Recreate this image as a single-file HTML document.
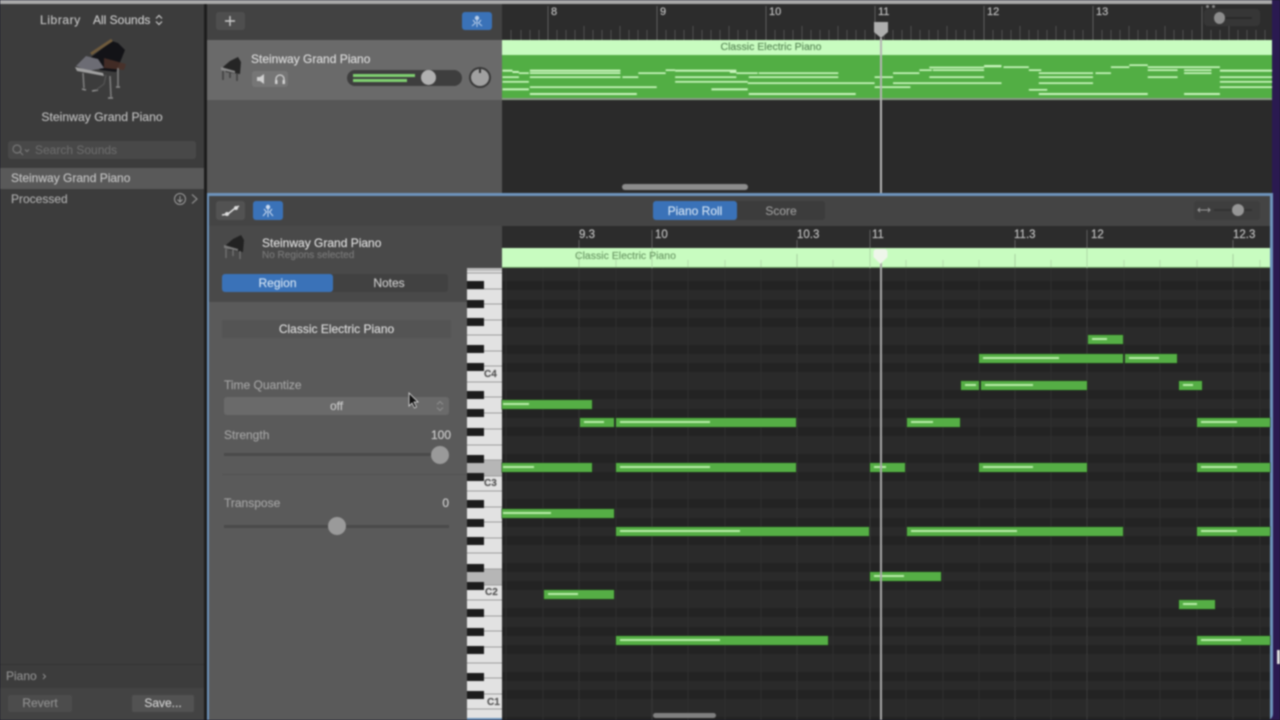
<!DOCTYPE html>
<html><head><meta charset="utf-8"><title>Piano Roll</title>
<style>
*{box-sizing:border-box;margin:0;padding:0}
html,body{width:1280px;height:720px;overflow:hidden;background:#1a1a2a}
body{font-family:"Liberation Sans",sans-serif;position:relative}
#w{position:absolute;left:0;top:0;width:1280px;height:720px;overflow:hidden;filter:blur(.7px);background:#2a1a50}
#w div,#w span,#w svg{position:absolute}
.t{white-space:nowrap;font-size:12px;line-height:14px;color:#c8c8c8;-webkit-text-stroke:.15px currentColor}
.n{background:#55ae45;height:9px;box-shadow:0 0 0 .5px #1c3a18}
.n i{position:absolute;left:4px;top:3px;height:2px;background:#b8eca8;display:block}
.knob{border-radius:50%;background:#9a9a9a}
</style></head><body>
<div id="w">
<!-- top bar -->
<div style="left:0;top:0;width:1272px;height:4px;background:#a9a9a9"></div>
<!-- library -->
<div style="left:0;top:4px;width:204px;height:716px;background:#3c3c3c"></div>
<div style="left:204px;top:4px;width:3px;height:716px;background:#1d1d1d"></div>
<div class="t" style="left:40px;top:13px;color:#c0c0c0;letter-spacing:.6px">Library</div>
<div class="t" style="left:93px;top:13px;color:#c8c8c8">All Sounds</div>
<svg style="left:155px;top:14px" width="8" height="12" viewBox="0 0 8 12"><path d="M1 4.5L4 1.5L7 4.5M1 7.5L4 10.5L7 7.5" fill="none" stroke="#c8c8c8" stroke-width="1.2"/></svg>
<svg style="left:60px;top:30px" width="80" height="75" viewBox="60 30 80 75">
<path d="M112 41L118 43L125 50L121 60L116 72L100 70L90 58Z" fill="#131317"/>
<path d="M91 54L112 40" stroke="#6e5a3c" stroke-width="3"/>
<path d="M76 66L86 56L98 59L104 68L88 71Z" fill="#6c6c74"/>
<path d="M75 67L103 73L104 76L77 71Z" fill="#a0a0a0"/>
<path d="M104 58L126 64L124 70L104 68Z" fill="#4a3028" opacity=".85"/>
<path d="M83 73L84 88M110 76L111 97M118 68L118 86" stroke="#7c7c7c" stroke-width="1.6"/>
<path d="M82 89L86 90M92 91L98 90M108 98L113 98M116 87L120 87" stroke="#909090" stroke-width="1.6"/>
<path d="M106 75L104 84L96 90" stroke="#555" stroke-width="1.2" fill="none"/>
</svg>
<div class="t" style="left:0;top:110px;width:204px;text-align:center;color:#bcbcbc;font-size:12.2px">Steinway Grand Piano</div>
<div style="left:8px;top:141px;width:188px;height:18px;background:#484848;border-radius:3px"></div>
<svg style="left:11px;top:143px" width="20" height="14" viewBox="0 0 20 14"><circle cx="6" cy="6" r="4" fill="none" stroke="#777" stroke-width="1.2"/><path d="M9 9L12 12M14 6.5L16 8.5L18 6.5" stroke="#777" stroke-width="1.2" fill="none"/></svg>
<div class="t" style="left:35px;top:143px;color:#6a6a6a">Search Sounds</div>
<div style="left:0;top:168px;width:204px;height:21px;background:#595959"></div>
<div class="t" style="left:11px;top:171px;color:#c2c2c2">Steinway Grand Piano</div>
<div class="t" style="left:11px;top:192px;color:#aaa">Processed</div>
<svg style="left:173px;top:192px" width="28" height="14" viewBox="0 0 28 14"><circle cx="7" cy="7" r="5.5" fill="none" stroke="#9a9a9a"/><path d="M7 4V10M4.5 7.5L7 10L9.5 7.5" stroke="#9a9a9a" fill="none"/><path d="M19 2.5L24 7L19 11.5" stroke="#8c8c8c" fill="none" stroke-width="1.2"/></svg>
<div style="left:0;top:664px;width:204px;height:1px;background:#333"></div>
<div style="left:0;top:688px;width:204px;height:32px;background:#434343"></div>
<div class="t" style="left:6px;top:669px;color:#8e8e8e">Piano</div>
<svg style="left:42px;top:673px" width="5" height="7" viewBox="0 0 5 7"><path d="M1 1L3.5 3.5L1 6" stroke="#8e8e8e" fill="none"/></svg>
<div style="left:8px;top:695px;width:64px;height:17px;background:#4c4c4c;border-radius:2px"></div>
<div class="t" style="left:8px;top:696px;width:64px;text-align:center;color:#8f8f8f">Revert</div>
<div style="left:132px;top:695px;width:62px;height:17px;background:#525252;border-radius:2px"></div>
<div class="t" style="left:132px;top:696px;width:62px;text-align:center;color:#d0d0d0">Save...</div>

<!-- tracks header -->
<div style="left:207px;top:4px;width:295px;height:36px;background:#424242"></div>
<div style="left:216px;top:12px;width:29px;height:18px;background:#4e4e4e;border-radius:3px"></div>
<svg style="left:224px;top:15px" width="12" height="12" viewBox="0 0 12 12"><path d="M6 1V11M1 6H11" stroke="#c8c8c8" stroke-width="1.4"/></svg>
<div style="left:462px;top:12px;width:30px;height:18px;background:#3a72b8;border-radius:3px"></div>
<svg style="left:470px;top:14px" width="14" height="14" viewBox="0 0 14 14"><circle cx="7" cy="4" r="2.2" fill="#b8cde8"/><path d="M7 6V13M3 6L5.5 9L2 12M11 6L8.5 9L12 12" stroke="#b8cde8" fill="none"/></svg>
<div style="left:207px;top:40px;width:295px;height:60px;background:#6a6a6a"></div>
<div style="left:207px;top:100px;width:295px;height:93px;background:#565656"></div>
<svg style="left:218px;top:54px" width="26" height="30" viewBox="0 0 26 30"><path d="M5 13L12 7L20 3L23 8L22 20L8 18Z" fill="#252525"/><path d="M3 13L17 17V19L3 16Z" fill="#8a8a8a"/><path d="M5 17V26M19 19V27M12 18V24" stroke="#3c3c3c" stroke-width="1.4"/></svg>
<div class="t" style="left:251px;top:52px;color:#dcdcdc">Steinway Grand Piano</div>
<div style="left:252px;top:71px;width:36px;height:16px;background:#767676;border-radius:3px"></div>
<svg style="left:254px;top:72px" width="32" height="14" viewBox="0 0 32 14"><path d="M3 5H6L10 2V12L6 9H3Z" fill="#d0d0d0"/><path d="M22 10V7A4 4 0 0 1 30 7V10" fill="none" stroke="#d0d0d0" stroke-width="1.3"/><rect x="21" y="8" width="2.5" height="4" fill="#d0d0d0"/><rect x="28.5" y="8" width="2.5" height="4" fill="#d0d0d0"/></svg>
<div style="left:347px;top:70px;width:115px;height:16px;background:#3e3e3e;border-radius:8px"></div>
<div style="left:353px;top:74px;width:62px;height:2.5px;background:#7fcf70"></div>
<div style="left:353px;top:79px;width:54px;height:2.5px;background:#7fcf70"></div>
<div class="knob" style="left:421px;top:70px;width:15px;height:15px;background:#b0b0b0"></div>
<div style="left:469px;top:67px;width:22px;height:21px;border-radius:50%;background:#a0a0a0;border:2.5px solid #383838"></div>
<div style="left:479px;top:69px;width:2px;height:4px;background:#333"></div>

<!-- top timeline -->
<div style="left:502px;top:4px;width:770px;height:36px;background:#2c2c2c"></div>
<svg style="left:502px;top:4px" width="770" height="36" viewBox="0 0 770 36">
<g stroke-width="1">
<path d="M46 2V36M155 2V36M264 2V36M373 2V36M482 2V36M591 2V36M700 2V36" stroke="#5e5e5e"/>
<path d="M9 26V36M19 26V36M28 26V36M37 26V36M55 26V36M64 26V36M73 26V36M82 22V36M91 26V36M100 26V36M109 26V36M118 22V36M127 26V36M136 26V36M145 26V36M164 26V36M173 26V36M182 26V36M191 22V36M200 26V36M209 26V36M218 26V36M227 22V36M236 26V36M245 26V36M254 26V36M273 26V36M282 26V36M291 26V36M300 22V36M309 26V36M318 26V36M327 26V36M336 22V36M345 26V36M354 26V36M363 26V36M382 26V36M391 26V36M400 26V36M409 22V36M418 26V36M427 26V36M436 26V36M445 22V36M454 26V36M463 26V36M472 26V36M491 26V36M500 26V36M509 26V36M518 22V36M527 26V36M536 26V36M545 26V36M554 22V36M563 26V36M572 26V36M581 26V36M600 26V36M609 26V36M618 26V36M627 22V36M636 26V36M645 26V36M654 26V36M663 22V36M672 26V36M681 26V36M690 26V36M709 26V36M718 26V36M727 22V36M736 26V36M745 26V36M754 26V36M763 26V36" stroke="#505050"/>
</g></svg>
<div class="t" style="left:551px;top:5px;color:#c0c0c0;font-size:11px">8</div>
<div class="t" style="left:660px;top:5px;color:#c0c0c0;font-size:11px">9</div>
<div class="t" style="left:769px;top:5px;color:#c0c0c0;font-size:11px">10</div>
<div class="t" style="left:878px;top:5px;color:#c0c0c0;font-size:11px">11</div>
<div class="t" style="left:987px;top:5px;color:#c0c0c0;font-size:11px">12</div>
<div class="t" style="left:1096px;top:5px;color:#c0c0c0;font-size:11px">13</div>
<div style="left:1204px;top:9px;width:56px;height:17px;background:#363636;border-radius:4px"></div>
<div style="left:1206px;top:5px;width:3px;height:3px;background:#888;border-radius:50%"></div>
<div style="left:1212px;top:5px;width:3px;height:3px;background:#888;border-radius:50%"></div>
<div style="left:1216px;top:17px;width:36px;height:2px;background:#2a2a2a"></div>
<div class="knob" style="left:1214px;top:12px;width:11px;height:12px;background:#8c8c8c"></div>

<!-- region -->
<div style="left:502px;top:40px;width:770px;height:16px;background:#c8fcc0"></div>
<div style="left:502px;top:55px;width:770px;height:44px;background:#52ae44"></div>
<div style="left:502px;top:98px;width:770px;height:2px;background:#8a9a86"></div>
<div class="t" style="left:502px;top:41px;width:538px;text-align:center;font-size:10.5px;color:#5b8a58;line-height:13px">Classic Electric Piano</div>
<svg style="left:0;top:0" width="1280" height="100" viewBox="0 0 1280 100">
<g transform="translate(500,0) scale(.4975,.3333)" fill="#c8f4bc">
<rect x="5" y="209" width="20" height="6"/><rect x="25" y="213" width="13" height="6"/><rect x="60" y="209" width="182" height="6"/><rect x="38" y="217" width="20" height="5"/><rect x="60" y="217" width="182" height="5"/><rect x="278" y="217" width="55" height="5"/><rect x="333" y="208" width="19" height="5"/><rect x="352" y="209" width="123" height="6"/><rect x="462" y="213" width="13" height="6"/><rect x="475" y="217" width="43" height="5"/><rect x="520" y="217" width="160" height="5"/>
<rect x="5" y="229" width="33" height="5"/><rect x="60" y="229" width="182" height="5"/><rect x="246" y="229" width="32" height="5"/><rect x="352" y="229" width="123" height="5"/><rect x="500" y="229" width="180" height="5"/>
<rect x="5" y="243" width="53" height="5"/><rect x="352" y="243" width="146" height="5"/><rect x="498" y="247" width="255" height="5"/><rect x="5" y="265" width="53" height="6"/><rect x="60" y="259" width="255" height="5"/><rect x="425" y="265" width="73" height="6"/><rect x="60" y="279" width="215" height="6"/><rect x="500" y="279" width="215" height="6"/>
<rect x="753" y="229" width="37" height="5"/><rect x="790" y="217" width="53" height="5"/><rect x="843" y="208" width="25" height="5"/><rect x="863" y="200" width="110" height="5"/><rect x="870" y="208" width="103" height="5"/><rect x="973" y="195" width="35" height="7"/><rect x="1012" y="199" width="51" height="5"/><rect x="1063" y="208" width="25" height="5"/><rect x="1083" y="217" width="109" height="5"/><rect x="1197" y="217" width="31" height="5"/><rect x="1228" y="199" width="37" height="5"/><rect x="1265" y="193" width="37" height="5"/><rect x="1302" y="199" width="145" height="5"/><rect x="1302" y="208" width="60" height="5"/><rect x="1375" y="208" width="55" height="5"/><rect x="1375" y="217" width="55" height="5"/><rect x="1447" y="209" width="105" height="6"/><rect x="1447" y="229" width="105" height="5"/><rect x="1302" y="229" width="60" height="5"/><rect x="863" y="229" width="110" height="5"/><rect x="1083" y="229" width="109" height="5"/><rect x="790" y="247" width="218" height="5"/><rect x="1083" y="247" width="109" height="5"/><rect x="1447" y="243" width="105" height="5"/><rect x="1447" y="259" width="105" height="5"/><rect x="753" y="259" width="72" height="5"/><rect x="1063" y="267" width="37" height="5"/><rect x="1083" y="279" width="219" height="6"/><rect x="1375" y="279" width="72" height="6"/>
</g></svg>
<div style="left:502px;top:100px;width:770px;height:93px;background:#2a2a2a"></div>
<div style="left:622px;top:184px;width:126px;height:6px;background:#8c8c8c;border-radius:3px"></div>
<!-- top playhead -->
<div style="left:880px;top:38px;width:1.5px;height:155px;background:#b4b4b4"></div>
<svg style="left:873px;top:21px" width="16" height="18" viewBox="0 0 16 18"><path d="M1 1H15V11L8 17L1 11Z" fill="#aeaeae"/></svg>

<!-- lower panel -->
<div style="left:207px;top:193px;width:1066px;height:527px;background:#6d93bb;border-radius:0 0 6px 0"></div>
<div style="left:209px;top:196px;width:1061px;height:30px;background:#444"></div>
<div style="left:209px;top:226px;width:293px;height:42px;background:#494949"></div>
<div style="left:209px;top:268px;width:258px;height:34px;background:#494949"></div>
<div style="left:209px;top:302px;width:258px;height:418px;background:#5a5a5a"></div>
<div style="left:222px;top:474px;width:245px;height:1px;background:#525252"></div>
<div style="left:216px;top:201px;width:29px;height:19px;background:#525252;border-radius:3px"></div>
<svg style="left:220px;top:203px" width="22" height="15" viewBox="0 0 22 15"><path d="M2 12L8 11L14 6L19 3" stroke="#ddd" stroke-width="1.5" fill="none"/><circle cx="7" cy="11" r="2" fill="#ddd"/><circle cx="16" cy="5" r="2" fill="#ddd"/></svg>
<div style="left:253px;top:201px;width:30px;height:19px;background:#3a72b8;border-radius:3px"></div>
<svg style="left:261px;top:203px" width="14" height="15" viewBox="0 0 14 15"><circle cx="7" cy="4" r="2.2" fill="#c8d8ee"/><path d="M7 6V14M3 6L5.5 9L2 13M11 6L8.5 9L12 13" stroke="#c8d8ee" fill="none"/></svg>
<svg style="left:221px;top:232px" width="26" height="30" viewBox="0 0 26 30"><path d="M5 13L12 7L20 3L23 8L22 20L8 18Z" fill="#222"/><path d="M3 13L17 17V19L3 16Z" fill="#787878"/><path d="M5 17V26M19 19V27M12 18V24" stroke="#777" stroke-width="1.2"/></svg>
<div class="t" style="left:262px;top:236px;color:#dedede">Steinway Grand Piano</div>
<div class="t" style="left:262px;top:250px;font-size:10px;line-height:12px;color:#787878">No Regions selected</div>
<div style="left:222px;top:274px;width:226px;height:18px;background:#414141;border-radius:3px"></div>
<div style="left:222px;top:274px;width:111px;height:18px;background:#3a72b8;border-radius:3px"></div>
<div class="t" style="left:222px;top:276px;width:111px;text-align:center;color:#cfe0f2">Region</div>
<div class="t" style="left:333px;top:276px;width:112px;text-align:center;color:#c8c8c8">Notes</div>
<div style="left:222px;top:320px;width:229px;height:18px;background:#545454"></div>
<div class="t" style="left:222px;top:322px;width:229px;text-align:center;color:#dcdcdc">Classic Electric Piano</div>
<div class="t" style="left:224px;top:378px;color:#a2a2a2">Time Quantize</div>
<div style="left:224px;top:397px;width:225px;height:18px;background:#6a6a6a;border-radius:3px"></div>
<div class="t" style="left:224px;top:399px;width:225px;text-align:center;color:#c8c8c8">off</div>
<svg style="left:436px;top:400px" width="8" height="12" viewBox="0 0 8 12"><path d="M1 4.5L4 1.5L7 4.5M1 7.5L4 10.5L7 7.5" fill="none" stroke="#8c8c8c" stroke-width="1.1"/></svg>
<svg style="left:407px;top:392px" width="14" height="18" viewBox="0 0 14 18"><path d="M2 1V14L5 11L7.5 16L9.5 15L7 10H11Z" fill="#111" stroke="#ddd" stroke-width=".8"/></svg>
<div class="t" style="left:224px;top:428px;color:#a2a2a2">Strength</div>
<div class="t" style="left:400px;top:428px;width:51px;text-align:right;color:#cccccc">100</div>
<div style="left:224px;top:453px;width:225px;height:3px;background:#4a4a4a"></div>
<div class="knob" style="left:431px;top:446px;width:18px;height:18px"></div>
<div class="t" style="left:224px;top:496px;color:#a2a2a2">Transpose</div>
<div class="t" style="left:400px;top:496px;width:49px;text-align:right;color:#cccccc">0</div>
<div style="left:224px;top:525px;width:225px;height:3px;background:#4a4a4a"></div>
<div class="knob" style="left:328px;top:517px;width:18px;height:18px"></div>

<!-- piano roll toolbar -->
<div style="left:653px;top:201px;width:172px;height:19px;background:#3c3c3c;border-radius:3px"></div>
<div style="left:653px;top:201px;width:84px;height:19px;background:#3a72b8;border-radius:3px"></div>
<div class="t" style="left:653px;top:204px;width:84px;text-align:center;color:#cfe0f2">Piano Roll</div>
<div class="t" style="left:737px;top:204px;width:88px;text-align:center;color:#9a9a9a">Score</div>
<div style="left:1194px;top:201px;width:66px;height:19px;background:#3e3e3e;border-radius:3px"></div>
<svg style="left:1197px;top:205px" width="14" height="10" viewBox="0 0 14 10"><path d="M1 5H13M3 3L1 5L3 7M11 3L13 5L11 7" stroke="#999" fill="none"/></svg>
<div style="left:1214px;top:209px;width:38px;height:2px;background:#333"></div>
<div class="knob" style="left:1232px;top:204px;width:12px;height:12px;background:#969696"></div>

<!-- piano roll ruler -->
<div style="left:502px;top:226px;width:768px;height:22px;background:#2c2c2c"></div>
<div style="left:502px;top:248px;width:768px;height:20px;background:#c8fcc0"></div>
<div style="left:502px;top:267px;width:768px;height:1.5px;background:#6a9a60"></div>
<svg style="left:502px;top:226px" width="768" height="42" viewBox="0 0 768 42">
<path d="M77 14V22M150 4V22M295 14V22M368 4V22M513 14V22M585 4V22M731 14V22" stroke="#5e5e5e" fill="none"/>
<path d="M150 22V42M368 22V42M585 22V42" stroke="#b0d8a8"/>
<path d="M77 28V41M295 28V41M513 28V41M731 28V41" stroke="#a8d0a0" fill="none"/>
<path d="M114 34V41M186 34V41M223 34V41M259 34V41M331 34V41M404 34V41M441 34V41M477 34V41M549 34V41M622 34V41M658 34V41M695 34V41M758 34V41" stroke="#b4dcac" fill="none"/>
</svg>
<div class="t" style="left:579px;top:228px;color:#c0c0c0;font-size:11.5px">9.3</div>
<div class="t" style="left:655px;top:228px;color:#c0c0c0;font-size:11.5px">10</div>
<div class="t" style="left:797px;top:228px;color:#c0c0c0;font-size:11.5px">10.3</div>
<div class="t" style="left:872px;top:228px;color:#c0c0c0;font-size:11.5px">11</div>
<div class="t" style="left:1014px;top:228px;color:#c0c0c0;font-size:11.5px">11.3</div>
<div class="t" style="left:1091px;top:228px;color:#c0c0c0;font-size:11.5px">12</div>
<div class="t" style="left:1233px;top:228px;color:#c0c0c0;font-size:11.5px">12.3</div>
<div class="t" style="left:575px;top:250px;font-size:10.5px;line-height:13px;color:#6e9c68">Classic Electric Piano</div>

<!-- grid -->
<div style="left:502px;top:268px;width:768px;height:452px;background-color:#2a2a2a;background-image:linear-gradient(to bottom,transparent 8px,#232323 8px,#232323 17px,transparent 17px,transparent 27px,#232323 27px,#232323 36px,transparent 36px,transparent 45px,#232323 45px,#232323 54px,transparent 54px,transparent 72px,#232323 72px,#232323 81px,transparent 81px,transparent 90px,#232323 90px,#232323 99px,transparent 99px);background-size:100% 109px;background-position:0 5px"></div>
<svg style="left:502px;top:268px" width="768" height="452" viewBox="0 0 768 452">
<path d="M4 0V452M41 0V452M114 0V452M186 0V452M223 0V452M259 0V452M331 0V452M404 0V452M441 0V452M477 0V452M549 0V452M622 0V452M658 0V452M695 0V452M758 0V452" stroke="#2f2f2f" fill="none"/>
<path d="M77 0V452M295 0V452M513 0V452M731 0V452" stroke="#353535" fill="none"/>
<path d="M150 0V452M368 0V452M585 0V452" stroke="#3a3a3a" fill="none"/>
</svg>

<!-- keys -->
<div style="left:467px;top:268px;width:35px;height:450px;background:#e2e2e2"></div>
<div style="left:467px;top:268px;width:35px;height:3px;background:#bbb"></div>
<div style="left:467px;top:460px;width:35px;height:16px;background:#b6b6b6"></div>
<div style="left:467px;top:569px;width:35px;height:16px;background:#b6b6b6"></div>
<svg style="left:467px;top:268px" width="35" height="452" viewBox="0 0 35 452">
<path d="M0 5H35M0 21H35M0 36H35M0 52H35M0 67H35M0 83H35M0 98H35M0 114H35M0 129H35M0 145H35M0 161H35M0 177H35M0 192H35M0 208H35M0 223H35M0 239H35M0 254H35M0 270H35M0 285H35M0 301H35M0 317H35M0 332H35M0 348H35M0 363H35M0 379H35M0 395H35M0 410H35M0 426H35M0 441H35" stroke="#9c9c9c" fill="none"/>
<g fill="#1c1c1c">
<rect x="0" y="13" width="17" height="8"/><rect x="0" y="32" width="17" height="8"/><rect x="0" y="50" width="17" height="8"/><rect x="0" y="77" width="17" height="8"/><rect x="0" y="95" width="17" height="8"/>
<rect x="0" y="123" width="17" height="8"/><rect x="0" y="141" width="17" height="8"/><rect x="0" y="160" width="17" height="8"/><rect x="0" y="187" width="17" height="8"/><rect x="0" y="205" width="17" height="8"/>
<rect x="0" y="232" width="17" height="8"/><rect x="0" y="251" width="17" height="8"/><rect x="0" y="269" width="17" height="8"/><rect x="0" y="296" width="17" height="8"/><rect x="0" y="314" width="17" height="8"/>
<rect x="0" y="341" width="17" height="8"/><rect x="0" y="360" width="17" height="8"/><rect x="0" y="378" width="17" height="8"/><rect x="0" y="405" width="17" height="8"/><rect x="0" y="423" width="17" height="8"/>
</g></svg>
<div class="t" style="left:484px;top:368px;font-size:10px;font-weight:bold;color:#555">C4</div>
<div class="t" style="left:484px;top:477px;font-size:10px;font-weight:bold;color:#555">C3</div>
<div class="t" style="left:485px;top:586px;font-size:10px;font-weight:bold;color:#555">C2</div>
<div class="t" style="left:487px;top:696px;font-size:10px;font-weight:bold;color:#555">C1</div>

<!-- notes -->
<div class="n" style="left:1088px;top:335px;width:35px"><i style="width:15px"></i></div>
<div class="n" style="left:979px;top:354px;width:144px"><i style="width:76px"></i></div>
<div class="n" style="left:1125px;top:354px;width:52px"><i style="width:30px"></i></div>
<div class="n" style="left:961px;top:381px;width:18px"><i style="width:11px"></i></div>
<div class="n" style="left:981px;top:381px;width:106px"><i style="width:48px"></i></div>
<div class="n" style="left:1179px;top:381px;width:23px"><i style="width:10px"></i></div>
<div class="n" style="left:502px;top:400px;width:90px"><i style="left:1px;width:26px"></i></div>
<div class="n" style="left:580px;top:418px;width:34px"><i style="width:20px"></i></div>
<div class="n" style="left:616px;top:418px;width:180px"><i style="width:90px"></i></div>
<div class="n" style="left:907px;top:418px;width:53px"><i style="width:22px"></i></div>
<div class="n" style="left:1197px;top:418px;width:73px"><i style="width:36px"></i></div>
<div class="n" style="left:502px;top:463px;width:90px"><i style="left:1px;width:31px"></i></div>
<div class="n" style="left:616px;top:463px;width:180px"><i style="width:90px"></i></div>
<div class="n" style="left:870px;top:463px;width:35px"><i style="width:12px"></i></div>
<div class="n" style="left:979px;top:463px;width:108px"><i style="width:50px"></i></div>
<div class="n" style="left:1197px;top:463px;width:73px"><i style="width:36px"></i></div>
<div class="n" style="left:502px;top:509px;width:112px"><i style="left:1px;width:48px"></i></div>
<div class="n" style="left:616px;top:527px;width:253px"><i style="width:120px"></i></div>
<div class="n" style="left:907px;top:527px;width:216px"><i style="width:106px"></i></div>
<div class="n" style="left:1197px;top:527px;width:73px"><i style="width:36px"></i></div>
<div class="n" style="left:870px;top:572px;width:71px"><i style="width:30px"></i></div>
<div class="n" style="left:544px;top:590px;width:70px"><i style="width:30px"></i></div>
<div class="n" style="left:1179px;top:600px;width:36px"><i style="width:14px"></i></div>
<div class="n" style="left:616px;top:636px;width:212px"><i style="width:100px"></i></div>
<div class="n" style="left:1197px;top:636px;width:73px"><i style="width:40px"></i></div>

<!-- playhead -->
<div style="left:880px;top:262px;width:1.5px;height:458px;background:#a8a8a8"></div>
<svg style="left:872px;top:248px" width="17" height="18" viewBox="0 0 17 18"><path d="M1.5 4A3 3 0 0 1 4.5 1H12.5A3 3 0 0 1 15.5 4V9L8.5 16L1.5 9Z" fill="#eef6ea"/></svg>
<div style="left:653px;top:713px;width:63px;height:5px;background:#808080;border-radius:3px"></div>
<div style="left:1277px;top:650px;width:3px;height:14px;background:#ddd"></div>
</div>
</body></html>
